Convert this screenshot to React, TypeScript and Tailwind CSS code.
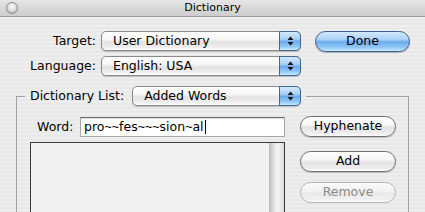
import type { ReactNode } from 'react'

const aqua =
  'bg-[linear-gradient(to_bottom,#d3e8fc_0%,#a9d0f6_40%,#6cabec_52%,#8fc6f6_80%,#c6ecff_100%)]'
const glass =
  'bg-[linear-gradient(to_bottom,#ffffff_0%,#f6f6f6_42%,#e2e2e2_55%,#eeeeee_85%,#ffffff_100%)]'

/** Up/down arrows on the blue end of a popup menu. */
function Arrows() {
  return (
    <svg width="7" height="12" viewBox="0 0 7 12">
      <polygon points="3.5,1.5 6.5,5 0.5,5" fill="#111" />
      <polygon points="0.5,7 6.5,7 3.5,10.5" fill="#111" />
    </svg>
  )
}

function Popup({ label, className = '' }: { label: string; className?: string }) {
  return (
    <div
      className={`flex h-[20px] rounded-[5px] border border-[#8a8a8a] shadow-[0_1px_1px_rgba(0,0,0,0.2)] ${glass} ${className}`}
    >
      <span className="flex-1 pl-[11px] leading-[18px]">{label}</span>
      <span
        className={`-my-px -mr-px flex w-[22px] items-center justify-center rounded-r-[5px] border border-[#41689b] ${aqua}`}
      >
        <Arrows />
      </span>
    </div>
  )
}

function Button({
  children,
  className = '',
  disabled = false,
}: {
  children: ReactNode
  className?: string
  disabled?: boolean
}) {
  return (
    <div
      className={`flex h-[21px] w-[96px] items-center justify-center rounded-full border ${
        disabled
          ? 'border-[#b4b4b4] text-[#8a8a8a] bg-[linear-gradient(to_bottom,#fbfbfb_0%,#f1f1f1_45%,#e8e8e8_55%,#f0f0f0_85%,#fafafa_100%)]'
          : `border-[#707070] text-black shadow-[0_1px_1px_rgba(0,0,0,0.2)] ${glass}`
      } ${className}`}
    >
      {children}
    </div>
  )
}

export default function App() {
  return (
    <div className="h-[212px] w-[425px] overflow-hidden font-['DejaVu_Sans',sans-serif] text-[12.5px] text-black">
      {/* title bar */}
      <div className="grid h-[17px] grid-cols-[1fr_auto_1fr] items-center border-b border-[#9c9c9c] bg-[linear-gradient(to_bottom,#e6e6e6,#cdcdcd)]">
        <div className="pl-[6px]">
          <div className="h-[12px] w-[12px] rounded-full border border-[#8a8a8a] bg-[radial-gradient(circle_at_50%_35%,#ffffff_0%,#dadada_50%,#a9a9a9_100%)]" />
        </div>
        <span className="text-[11px] leading-[16px]">Dictionary</span>
        <div />
      </div>

      {/* window body */}
      <div className="h-[195px] bg-[repeating-linear-gradient(to_bottom,#eeeeee_0px,#eeeeee_2px,#e8e8e8_2px,#e8e8e8_4px)] pt-[14px]">
        <div className="flex items-start">
          <div className="grid grid-cols-[96px_200px] items-center gap-x-[5px] gap-y-[5px]">
            <span className="text-right">Target:</span>
            <Popup label="User Dictionary" />
            <span className="text-right">Language:</span>
            <Popup label="English: USA" />
          </div>
          <div
            className={`ml-[14px] flex h-[21px] w-[95px] items-center justify-center rounded-full border border-[#3e5f8e] shadow-[0_1px_1px_rgba(0,0,0,0.25)] ${aqua}`}
          >
            Done
          </div>
        </div>

        <fieldset className="ml-[16px] mt-[10px] w-[393px] border border-[#a2a2a2]">
          <legend className="ml-[8px] px-[5px]">
            <div className="flex h-[20px] items-center">
              <span>Dictionary List:</span>
              <Popup label="Added Words" className="ml-[8px] w-[169px]" />
            </div>
          </legend>

          <div className="flex pl-[13px]">
            <div className="w-[255px]">
              <div className="mt-[11px] flex h-[20px] items-center">
                <span className="w-[50px] pl-[7px]">Word:</span>
                <div className="flex h-[20px] w-[205px] items-center border border-[#a8a8a8] border-t-[#6e6e6e] bg-white pl-[3px] shadow-[inset_0_1px_1px_rgba(0,0,0,0.15)]">
                  <span>pro</span>
                  <span className="font-['Liberation_Sans',sans-serif]">~~</span>
                  <span>fes</span>
                  <span className="font-['Liberation_Sans',sans-serif]">~~~</span>
                  <span>sion</span>
                  <span className="font-['Liberation_Sans',sans-serif]">~</span>
                  <span>al</span>
                  <span className="ml-px h-[14px] w-px bg-black" />
                </div>
              </div>
              <div className="mt-[5px] flex h-[80px] border border-[#3a3a3a] bg-[#f1f1f1]">
                <div className="flex-1" />
                <div className="w-[15px] bg-[linear-gradient(to_right,#b9b9b9_0%,#e4e4e4_35%,#f7f7f7_55%,#dadada_100%)]" />
              </div>
            </div>

            <div className="ml-[15px] mt-[10px] flex flex-col">
              <Button>Hyphenate</Button>
              <Button className="mt-[14px]">Add</Button>
              <Button className="mt-[10px]" disabled>
                Remove
              </Button>
            </div>
          </div>
        </fieldset>
      </div>
    </div>
  )
}
